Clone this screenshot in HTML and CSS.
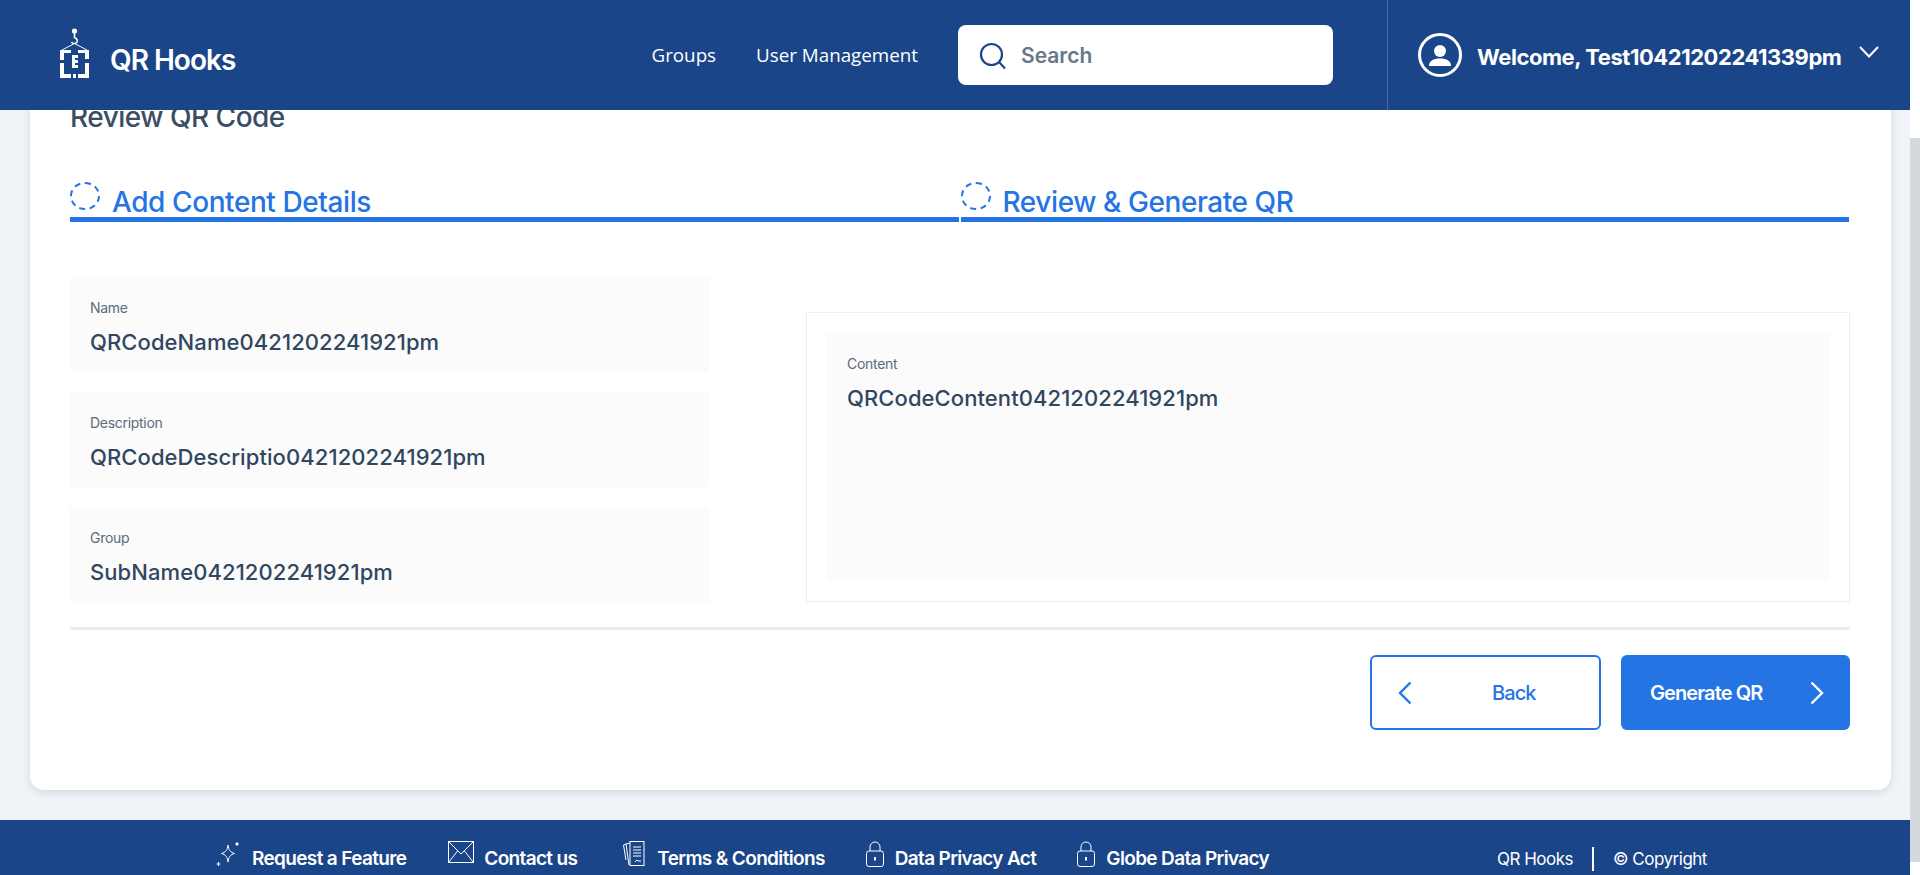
FILE: index.html
```html
<!DOCTYPE html>
<html lang="en">
<head>
    <meta charset="UTF-8">
    <meta name="viewport" content="width=device-width, initial-scale=1.0">
    <title>QR Hooks - Review QR Code</title>
    <link rel="stylesheet" href="styles.css">
</head>
<body>

<div class="app">
    <header class="topbar">
        <a class="brand" href="#">
            <svg class="brand-logo" width="30" height="50" viewBox="0 0 30 50">
                <circle cx="14.5" cy="3" r="2.6" fill="#fff"/>
                <path d="M14.5 5v4.500c2.700 1 3.200 3 2.400 4.600-1 1.800-4.300 1.800-5.500 0" fill="none" stroke="#fff" stroke-width="1.600"/>
                <path d="M14.5 15.500 2 22M14.500 15.500 27 22" fill="none" stroke="#fff" stroke-width="1"/>
                <path d="M0 22h11v3H4v7H0zM18 22h11v9h-4v-6h-7zM0 35h4v11h7v4H0zM25 35h4v15H18v-4h7zM13 46h3v4h-3zM12 27h6v3h-3v2h3v3h-3v2h3v3h-6z" fill="#fff"/>
            </svg>
            <span class="brand-name">QR Hooks</span>
        </a>
        <nav class="topnav">
            <a href="#">Groups</a>
            <a href="#">User Management</a>
        </nav>
        <div class="search">
            <svg width="28" height="28" viewBox="0 0 28 28" fill="none" stroke="#1b4589" stroke-width="2.2">
                <circle cx="12.5" cy="12.5" r="10.5"/>
                <path d="M20 20l6 6.5"/>
            </svg>
            <span>Search</span>
        </div>
        <div class="user">
            <svg width="44" height="44" viewBox="0 0 44 44" fill="none">
                <circle cx="22" cy="22" r="20.5" stroke="#fff" stroke-width="3"/>
                <circle cx="22" cy="18" r="6" fill="#fff"/>
                <path d="M11 33c0-5 4-7.500 11-7.500S33 28 33 33z" fill="#fff"/>
            </svg>
            <span class="welcome">Welcome, Test10421202241339pm</span>
            <svg width="20" height="12" viewBox="0 0 20 12" fill="none" stroke="#fff" stroke-width="2">
                <path d="M1 1l9 9.500L19 1"/>
            </svg>
        </div>
    </header>

    <main class="content">
        <section class="card">
            <h1 class="card-title">Review QR Code</h1>

            <div class="steps">
                <div class="step">
                    <span class="step-dot"></span>
                    <span>Add Content Details</span>
                </div>
                <div class="step step-next">
                    <span class="step-dot"></span>
                    <span>Review &amp; Generate QR</span>
                </div>
            </div>

            <div class="review">
                <div class="review-left">
                    <div class="field">
                        <div class="field-label">Name</div>
                        <div class="field-value">QRCodeName0421202241921pm</div>
                    </div>
                    <div class="field">
                        <div class="field-label">Description</div>
                        <div class="field-value">QRCodeDescriptio0421202241921pm</div>
                    </div>
                    <div class="field">
                        <div class="field-label">Group</div>
                        <div class="field-value">SubName0421202241921pm</div>
                    </div>
                </div>
                <div class="review-right">
                    <div class="field field-tall">
                        <div class="field-label">Content</div>
                        <div class="field-value">QRCodeContent0421202241921pm</div>
                    </div>
                </div>
            </div>

            <div class="actions">
                <button class="btn btn-back" type="button">
                    <svg width="14" height="24" viewBox="0 0 14 24" fill="none" stroke="#2574e4" stroke-width="2.4"><path d="M12.500 1.500 2 12l10.500 10.500"/></svg>
                    <span>Back</span>
                </button>
                <button class="btn btn-next" type="button">
                    <span>Generate QR</span>
                    <svg width="14" height="24" viewBox="0 0 14 24" fill="none" stroke="#fff" stroke-width="2.400"><path d="M1.500 1.500 12 12 1.500 22.500"/></svg>
                </button>
            </div>
        </section>
    </main>

    <footer class="footer">
        <div class="footer-links">
            <a href="#">
                <svg width="24" height="26" viewBox="0 0 24 26" fill="none" stroke="#fff" stroke-width="1">
                    <path d="M12 4c.6 5 2.500 7.500 6.500 8.500-4 1-5.900 3.500-6.500 8.500-.6-5-2.500-7.500-6.500-8.500 4-1 5.900-3.500 6.500-8.500z"/>
                    <circle cx="21" cy="3" r="1.200" fill="#fff"/>
                    <path d="M2.500 21v4M.5 23h4" stroke-width="1.200"/>
                </svg>
                <span>Request a Feature</span>
            </a>
            <a class="link-mail" href="#">
                <svg width="26" height="22" viewBox="0 0 26 22" fill="none" stroke="#fff" stroke-width="1">
                    <rect x=".5" y=".5" width="25" height="21"/>
                    <path d="M.5.5 13 13 25.500.5M.5 21.500l9-11.500M25.500 21.500l-9-11.500"/>
                </svg>
                <span>Contact us</span>
            </a>
            <a href="#">
                <svg width="22" height="26" viewBox="0 0 22 26" fill="none" stroke="#fff" stroke-width="1">
                    <rect x="7" y=".5" width="14" height="24"/>
                    <path d="M7 2 3 3l3 21M3 3 .5 4 3 19"/>
                    <path d="M10 6h8M10 9h8M10 12h8M10 15h8M12 21l2-2 1 1h3" stroke-width="1"/>
                </svg>
                <span>Terms &amp; Conditions</span>
            </a>
            <a class="link-lock" href="#">
                <svg width="18" height="26" viewBox="0 0 18 26" fill="none" stroke="#fff" stroke-width="1">
                    <rect x=".5" y="10" width="17" height="15.500" rx="2.500"/>
                    <path d="M4 10V6a5 5 0 0 1 10 0v4"/>
                    <path d="M9 16v3.500" stroke-width="2"/>
                </svg>
                <span>Data Privacy Act</span>
            </a>
            <a class="link-lock" href="#">
                <svg width="18" height="26" viewBox="0 0 18 26" fill="none" stroke="#fff" stroke-width="1">
                    <rect x=".5" y="10" width="17" height="15.500" rx="2.500"/>
                    <path d="M4 10V6a5 5 0 0 1 10 0v4"/>
                    <path d="M9 16v3.500" stroke-width="2"/>
                </svg>
                <span>Globe Data Privacy</span>
            </a>
        </div>
        <div class="footer-meta">
            <span>QR Hooks</span>
            <span class="footer-sep"></span>
            <span>© Copyright</span>
        </div>
    </footer>
</div>

<div class="scrollbar">
    <div class="scrollbar-thumb"></div>
</div>

</body>
</html>
```

FILE: styles.css
```css
* {
    box-sizing: border-box;
}
body {
    margin: 0;
    height: 875px;
    overflow: hidden;
    display: flex;
    font-family: Inter, "Liberation Sans", sans-serif;
    background-color: #fff;
    color: #31465f;
}
a {
    color: inherit;
    text-decoration: none;
}
.app {
    width: 1910px;
    height: 875px;
    display: flex;
    flex-direction: column;
    background-color: #f0f4f8;
}

/* Top bar */
.topbar {
    height: 110px;
    flex: none;
    display: flex;
    align-items: center;
    background-color: #1b4589;
    color: #fff;
    padding-left: 60px;
}
.brand {
    display: flex;
    align-items: center;
    gap: 20px;
    margin-top: -5px;
}
.brand-name {
    font-size: 28px;
    font-weight: 600;
    letter-spacing: -1px;
    margin-top: 14px;
}
.topnav {
    margin-left: auto;
    display: flex;
    gap: 40px;
    font-family: "Open Sans", sans-serif;
    font-size: 18.8px;
}
.search {
    width: 375px;
    height: 60px;
    margin-left: 40px;
    padding-left: 21px;
    display: flex;
    align-items: center;
    gap: 14px;
    background-color: #fff;
    border-radius: 8px;
    color: #67788a;
    font-size: 21px;
    font-weight: 600;
}
.search svg {
    margin-top: 2px;
}
.user {
    width: 523px;
    height: 110px;
    margin-left: 54px;
    padding-left: 30px;
    display: flex;
    align-items: center;
    border-left: 1px solid #4a6a9f;
}
.welcome {
    margin-left: 15px;
    margin-top: 4px;
    font-size: 22px;
    font-weight: 700;
    letter-spacing: -.45px;
    width: 382px;
    white-space: nowrap;
}
.user svg:last-child {
    margin-top: -6px;
}

/* Main card, scrolled so its top sits under the top bar */
.content {
    height: 710px;
    flex: none;
    overflow: hidden;
    display: flex;
    flex-direction: column;
    justify-content: flex-end;
    padding: 0 19px 30px 30px;
}
.card {
    flex: none;
    padding: 40px 41px 60px 40px;
    background-color: #fff;
    border-radius: 0 0 14px 14px;
    box-shadow: 0 2px 8px rgba(40, 60, 90, .16);
}
.card-title {
    margin: 0 0 48px;
    font-size: 28px;
    line-height: 34px;
    font-weight: 500;
    letter-spacing: -.5px;
    color: #3a4d63;
}
.steps {
    display: flex;
    gap: 2px;
    margin-right: 1px;
}
.step {
    flex: 1;
    height: 40px;
    display: flex;
    gap: 12px;
    border-bottom: 5px solid #2574e4;
    color: #2574e4;
    font-size: 28px;
    line-height: 40px;
    font-weight: 500;
    letter-spacing: -.42px;
    white-space: nowrap;
}
.step-dot {
    width: 30px;
    height: 28px;
    flex: none;
    border: 2px dashed #2574e4;
    border-radius: 50%;
}
.review {
    display: flex;
    justify-content: space-between;
    margin-top: 55px;
}
.review-left {
    width: 639px;
    display: flex;
    flex-direction: column;
    gap: 20px;
}
.review-right {
    width: 1044px;
    height: 290px;
    align-self: flex-end;
    padding: 20px;
    border: 1px solid #eee;
    display: flex;
}
.field {
    height: 95px;
    padding: 21px 20px 0;
    background-color: #fbfbfc;
}
.field-tall {
    flex: 1;
    height: auto;
}
.field-label {
    font-size: 14px;
    line-height: 20px;
    letter-spacing: -.3px;
    color: #5d6b7a;
}
.field-value {
    margin-top: 9px;
    font-size: 22px;
    line-height: 30px;
    font-weight: 500;
    letter-spacing: .08px;
    color: #31465f;
}
.actions {
    margin-top: 25px;
    padding-top: 25px;
    border-top: 3px solid #ebebeb;
    display: flex;
    justify-content: flex-end;
    gap: 20px;
}
.btn {
    height: 75px;
    display: flex;
    align-items: center;
    border-radius: 6px;
    font-family: inherit;
    font-size: 20px;
    font-weight: 500;
    letter-spacing: -.9px;
    cursor: pointer;
}
.btn-back {
    width: 231px;
    padding: 0 0 0 26px;
    gap: 80px;
    background-color: #fff;
    border: 2px solid #2574e4;
    color: #2574e4;
}
.btn-next {
    width: 229px;
    padding: 0 26px 0 29px;
    justify-content: space-between;
    background-color: #2574e4;
    border: 0;
    color: #fff;
    font-weight: 600;
}

/* Footer */
.footer {
    height: 55px;
    flex: none;
    display: flex;
    padding: 24px 0 0 216px;
    background-color: #1b4589;
    color: #fff;
    overflow: hidden;
}
.footer-links {
    display: flex;
    gap: 41px;
    font-size: 19px;
    line-height: 30px;
    font-weight: 600;
    letter-spacing: -.65px;
}
.footer-links a {
    display: flex;
    gap: 12px;
    white-space: nowrap;
}
.footer-links .link-mail {
    gap: 10px;
    margin: 0 5px 0 1px;
}
.footer-links .link-lock {
    gap: 11px;
}
.footer-links svg {
    margin-top: -3px;
}
.footer-meta {
    margin-left: auto;
    width: 413px;
    display: flex;
    gap: 19px;
    font-size: 17px;
    line-height: 30px;
    letter-spacing: -.5px;
    white-space: nowrap;
}
.footer-sep {
    width: 2px;
    height: 24px;
    margin-top: 3px;
    background-color: #fff;
}

/* Browser scrollbar */
.scrollbar {
    width: 10px;
    height: 875px;
    padding: 138px 0 13px;
    background-color: #fff;
}
.scrollbar-thumb {
    height: 100%;
    background-color: #d5d9dd;
}
```
